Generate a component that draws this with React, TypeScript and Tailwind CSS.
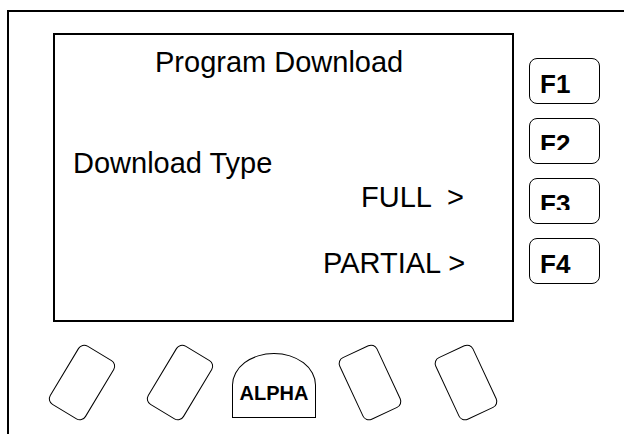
import React from "react";

function FKey({ label, clip }: { label: string; clip?: boolean }) {
  return (
    <div className="w-[71px] h-[46px] border-[1.5px] border-black rounded-[8px] pl-[10px] pt-[12px]">
      <span
        className={
          "block text-[26px] leading-[26px] font-bold text-black " +
          (clip ? "h-[19px] overflow-hidden" : "")
        }
      >
        {label}
      </span>
    </div>
  );
}

function SoftKey({ dir }: { dir: "l" | "r" }) {
  return (
    <div className="w-[72px] h-[80px] flex items-center justify-center shrink-0">
      <div
        className={
          "w-[42px] h-[69px] border-[1.5px] border-black rounded-[7px] " +
          (dir === "l" ? "rotate-[31deg]" : "-rotate-[25deg]")
        }
      />
    </div>
  );
}

export default function App() {
  return (
    <div className="w-[624px] h-[434px] overflow-hidden bg-white font-['Liberation_Sans',Arial,sans-serif] text-black">
      <div className="ml-[7px] mt-[10px] w-[700px] h-[500px] border-t-2 border-l-2 border-black pl-[37px] pt-[21px]">
        <div className="flex">
          <div className="ml-[7px] w-[461px] h-[289px] border-2 border-black shrink-0 text-[29px] leading-[29px] whitespace-pre">
            <div className="mt-[13px] pl-[100px]">Program Download</div>
            <div className="mt-[72px] pl-[18px]">Download Type</div>
            <div className="mt-[5px] pl-[306px]">{"FULL  >"}</div>
            <div className="mt-[37px] pl-[268px]">{"PARTIAL >"}</div>
          </div>
          <div className="ml-[15px] mt-[25px] flex flex-col gap-[14px]">
            <FKey label="F1" />
            <FKey label="F2" clip />
            <FKey label="F3" clip />
            <FKey label="F4" />
          </div>
        </div>
        <div className="mt-[20px] flex items-center h-[80px]">
          <SoftKey dir="l" />
          <div className="ml-[26px]">
            <SoftKey dir="l" />
          </div>
          <div className="ml-[16px] mt-[6px] w-[84px] h-[65px] border-[1.5px] border-black rounded-tl-[42px_32px] rounded-tr-[42px_32px] flex flex-col justify-end items-center pb-[14px] shrink-0">
            <span className="text-[20px] leading-[20px] font-bold">ALPHA</span>
          </div>
          <div className="ml-[18px]">
            <SoftKey dir="r" />
          </div>
          <div className="ml-[24px]">
            <SoftKey dir="r" />
          </div>
        </div>
      </div>
    </div>
  );
}
